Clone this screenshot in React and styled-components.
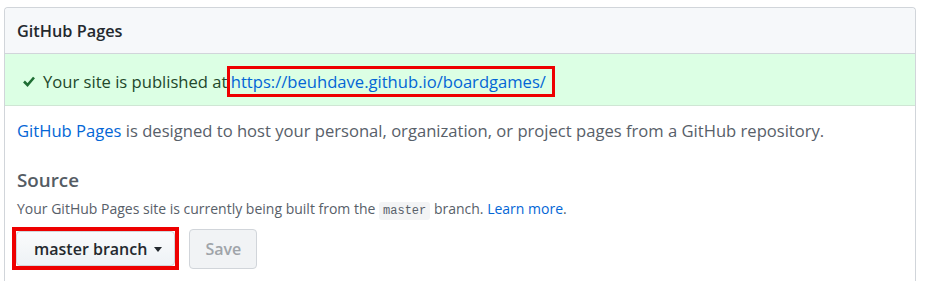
import React from "react";
import styled, { createGlobalStyle } from "styled-components";

const GlobalStyle = createGlobalStyle`
  html, body {
    margin: 0;
    padding: 0;
    background: #ffffff;
  }
  body {
    font-family: "Open Sans", "Noto Sans", "Liberation Sans", sans-serif;
    color: #24292e;
  }
`;

const Page = styled.div`
  padding: 7px 12px 0 4px;
  height: 274px;
  overflow: hidden;
`;

const Box = styled.section`
  border: 1px solid #d1d5da;
  border-bottom: none;
  border-radius: 4px 4px 0 0;
  height: 300px;
`;

const BoxHeader = styled.header`
  display: flex;
  align-items: center;
  height: 45px;
  padding: 0 12px;
  background: #f6f8fa;
  border-bottom: 1px solid #d1d5da;
  border-radius: 4px 4px 0 0;
  font-size: 16.3px;
  font-weight: 600;
  color: #24292e;
`;

const Flash = styled.div`
  display: flex;
  align-items: center;
  gap: 8px;
  height: 51px;
  padding: 3px 18px 0;
  box-sizing: border-box;
  height: 52px;
  background: #dcffe4;
  border-bottom: 1px solid #cfe6d4;
  font-size: 16.6px;
  color: #22482b;
`;

const Check = styled.svg`
  width: 12px;
  height: 11px;
  flex: none;
  margin-top: 1px;
`;

const SiteLink = styled.a`
  color: #0366d6;
  text-decoration: none;
  padding: 1px 6px 1px 1px;
  margin-left: -2px;
  outline: 3px solid #ee0000;
`;

const Body = styled.div`
  padding: 13px 12px 0;
`;

const Lead = styled.p`
  margin: 0;
  font-size: 16.6px;
  line-height: 24px;
  color: #586069;
`;

const Link = styled.a`
  color: #0366d6;
  text-decoration: none;
`;

const Subhead = styled.h3`
  margin: 25px 0 0;
  font-size: 18.8px;
  font-weight: 600;
  line-height: 24px;
  color: #545c64;
`;

const Note = styled.p`
  margin: 7px 0 0;
  font-size: 14px;
  line-height: 20px;
  color: #586069;
`;

const Code = styled.code`
  font-family: "Liberation Mono", "DejaVu Sans Mono", monospace;
  font-size: 12px;
  padding: 2px 4px;
  background: #f3f4f5;
  border-radius: 3px;
`;

const Actions = styled.div`
  display: flex;
  align-items: center;
  gap: 10px;
  margin-top: 6px;
  margin-left: -5px;
`;

/* red annotation frame drawn over the branch button */
const MarkFrame = styled.span`
  display: inline-flex;
  border: 4px solid #ee0000;
  margin: 0;
`;

const Button = styled.button`
  display: inline-flex;
  align-items: center;
  gap: 7px;
  height: ${(p) => (p.$disabled ? 40 : 35)}px;
  padding: 0 ${(p) => (p.$disabled ? 15 : 12)}px 0
    ${(p) => (p.$disabled ? 15 : 17)}px;
  font-family: inherit;
  font-size: 16px;
  font-weight: 600;
  color: ${(p) => (p.$disabled ? "#9fa4a9" : "#24292e")};
  background: ${(p) =>
    p.$disabled ? "#f1f3f5" : "linear-gradient(#fafbfc, #eff3f6 90%)"};
  border: 1px solid #d1d5da;
  border-radius: 4px;
  cursor: pointer;
`;

const Caret = styled.span`
  width: 0;
  height: 0;
  border-left: 4.5px solid transparent;
  border-right: 4.5px solid transparent;
  border-top: 5px solid #24292e;
  margin-top: 2px;
`;

export default function App() {
  return (
    <Page>
      <GlobalStyle />
      <Box>
        <BoxHeader>GitHub Pages</BoxHeader>
        <Flash>
          <Check viewBox="0 0 12 11" aria-hidden="true">
            <polyline
              points="1,5.5 4.5,9 11,1.5"
              fill="none"
              stroke="#1f6e34"
              strokeWidth="2.6"
            />
          </Check>
          <span>
            Your site is published at{" "}
            <SiteLink href="#">https://beuhdave.github.io/boardgames/</SiteLink>
          </span>
        </Flash>
        <Body>
          <Lead>
            <Link href="#">GitHub Pages</Link> is designed to host your
            personal, organization, or project pages from a GitHub repository.
          </Lead>
          <Subhead>Source</Subhead>
          <Note>
            Your GitHub Pages site is currently being built from the{" "}
            <Code>master</Code> branch. <Link href="#">Learn more</Link>.
          </Note>
          <Actions>
            <MarkFrame>
              <Button>
                master branch <Caret />
              </Button>
            </MarkFrame>
            <Button $disabled>Save</Button>
          </Actions>
        </Body>
      </Box>
    </Page>
  );
}
